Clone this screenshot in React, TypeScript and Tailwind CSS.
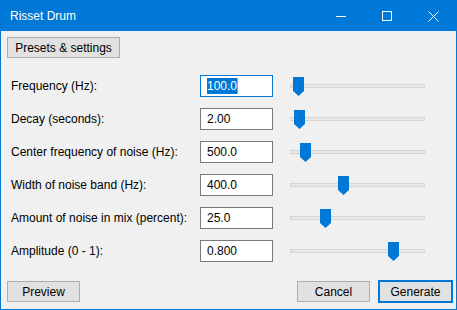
import * as React from "react";

const rows = [
  { label: "Frequency (Hz):", value: "100.0", thumb: 3, focused: true },
  { label: "Decay (seconds):", value: "2.00", thumb: 4 },
  { label: "Center frequency of noise (Hz):", value: "500.0", thumb: 10 },
  { label: "Width of noise band (Hz):", value: "400.0", thumb: 48 },
  { label: "Amount of noise in mix (percent):", value: "25.0", thumb: 30 },
  { label: "Amplitude (0 - 1):", value: "0.800", thumb: 98 },
];

function Slider({ thumb }: { thumb: number }) {
  return (
    <div className="relative w-[135px] h-[22px]">
      <div className="absolute left-0 right-0 top-[9px] h-[4px] bg-[#e7e7e7] border border-[#d6d6d6]" />
      <svg className="absolute top-[2px]" style={{ left: thumb }} width="11" height="19" viewBox="0 0 11 19">
        <path d="M0 0 H11 V14 L5.5 19 L0 14 Z" fill="#0078d7" />
      </svg>
    </div>
  );
}

export default function App() {
  return (
    <div
      className="w-[457px] h-[310px] border border-[#0078d7] bg-[#f0f0f0] flex flex-col text-[12px] text-black"
      style={{ fontFamily: '"Liberation Sans", Arial, sans-serif' }}
    >
      <div className="h-[30px] bg-[#0078d7] flex items-center text-white">
        <span className="pl-[9px] flex-1">Risset Drum</span>
        <div className="flex items-center h-full">
          <div className="w-[46px] h-full flex items-center justify-center">
            <div className="w-[10px] h-px bg-white" />
          </div>
          <div className="w-[46px] h-full flex items-center justify-center">
            <div className="w-[10px] h-[10px] border border-white" />
          </div>
          <div className="w-[46px] h-full flex items-center justify-center">
            <svg width="11" height="11" viewBox="0 0 11 11">
              <path d="M0.5 0.5 L10.5 10.5 M10.5 0.5 L0.5 10.5" stroke="#fff" strokeWidth="1" />
            </svg>
          </div>
        </div>
      </div>

      <div className="pl-[6px] pt-[6px]">
        <button className="w-[113px] h-[21px] border border-[#adadad] bg-[#e1e1e1] leading-none">
          Presets &amp; settings
        </button>
      </div>

      <div className="mt-[17px] pl-[10px] flex flex-col gap-[11px]">
        {rows.map((r) => (
          <div key={r.label} className="flex items-center h-[22px]">
            <span className="w-[189px]">{r.label}</span>
            <div
              className={
                "w-[73px] h-[22px] bg-white border flex items-center pl-[6px] " +
                (r.focused ? "border-[#0078d7]" : "border-[#7a7a7a]")
              }
            >
              {r.focused ? (
                <span className="bg-[#0078d7] text-white leading-[16px] border-r border-[#ff8c00]">{r.value}</span>
              ) : (
                <span>{r.value}</span>
              )}
            </div>
            <div className="ml-[17px]">
              <Slider thumb={r.thumb} />
            </div>
          </div>
        ))}
      </div>

      <div className="mt-auto mb-[6px] pl-[6px] pr-[3px] flex items-center">
        <button className="w-[73px] h-[21px] border border-[#adadad] bg-[#e1e1e1] leading-none">Preview</button>
        <div className="flex-1" />
        <button className="w-[73px] h-[21px] border border-[#adadad] bg-[#e1e1e1] leading-none">Cancel</button>
        <button className="ml-[8px] w-[75px] h-[23px] border-2 border-[#0078d7] bg-[#e1e1e1] leading-none">
          Generate
        </button>
      </div>
    </div>
  );
}
